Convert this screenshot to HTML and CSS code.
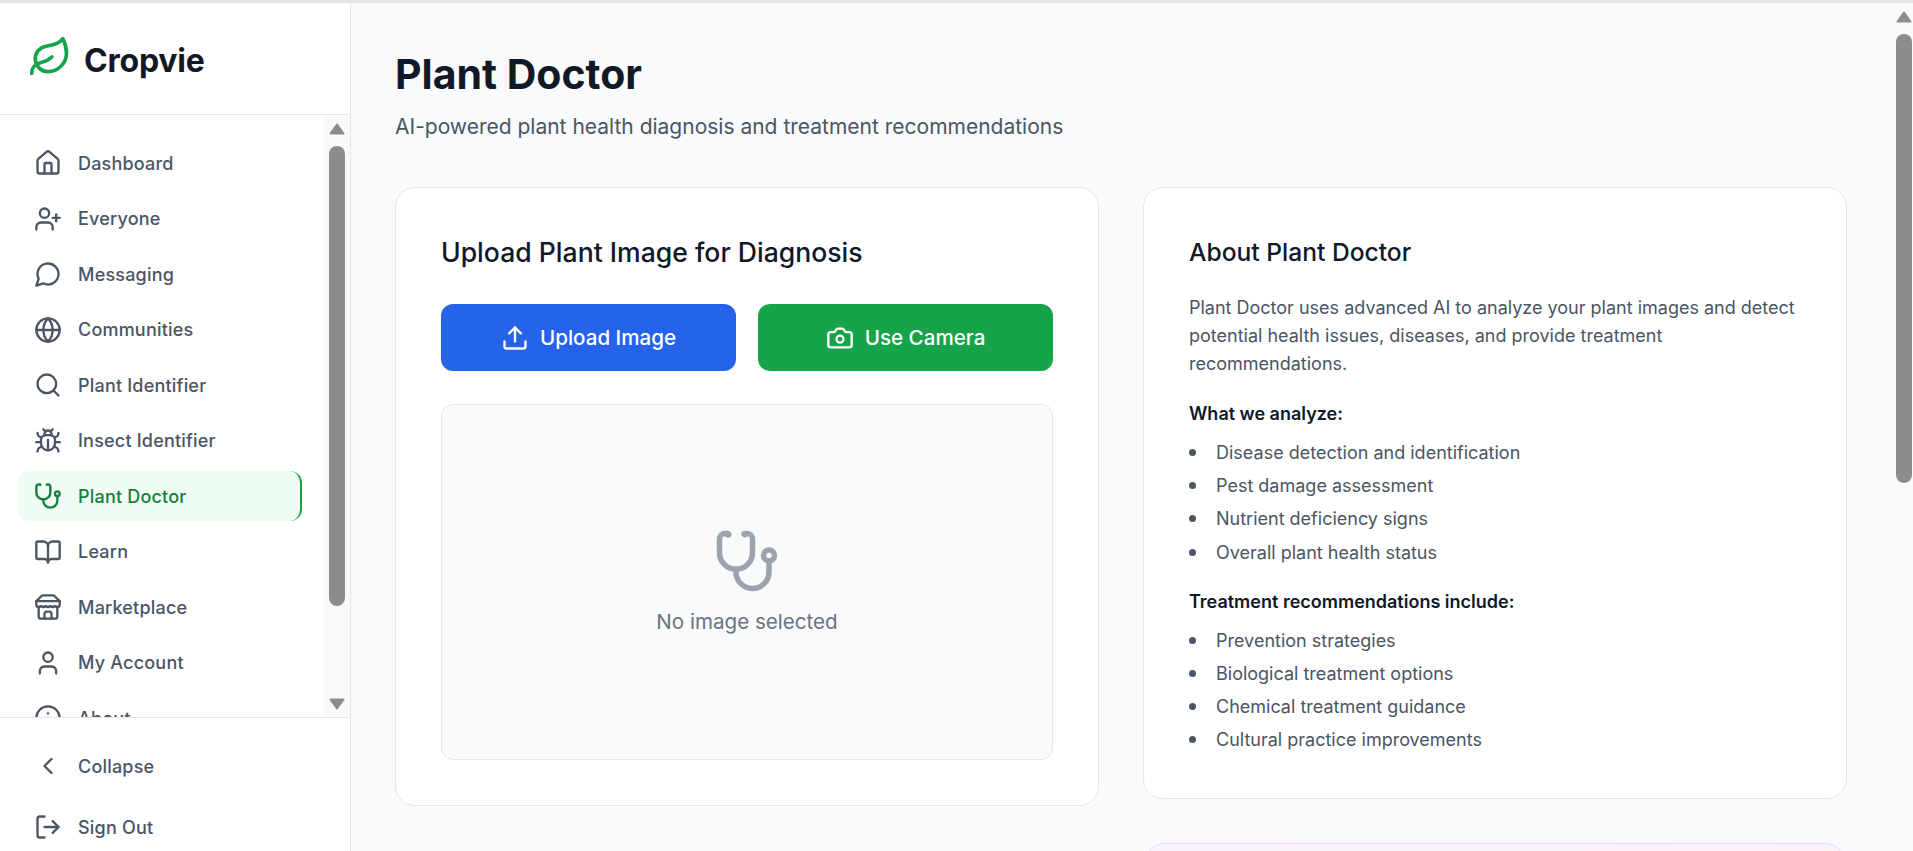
FILE: index.html
```html
<!DOCTYPE html>
<html lang="en">
<head>
    <meta charset="UTF-8">
    <title>Plant Doctor - Cropvie</title>
    <link rel="stylesheet" href="styles.css">
</head>
<body>
    <svg class="icon-defs" xmlns="http://www.w3.org/2000/svg">
        <symbol id="i-leaf" viewBox="0 0 24 24"><path d="M11 20A7 7 0 0 1 9.8 6.1C15.5 5 17 4.48 19 2c1 2 2 4.18 2 8 0 5.5-4.78 10-10 10Z"/><path d="M2 21c0-3 1.85-5.36 5.08-6C9.5 14.52 12 13 13 12"/></symbol>
        <symbol id="i-home" viewBox="0 0 24 24"><path d="M15 21v-8a1 1 0 0 0-1-1h-4a1 1 0 0 0-1 1v8"/><path d="M3 10a2 2 0 0 1 .709-1.528l7-5.999a2 2 0 0 1 2.582 0l7 5.999A2 2 0 0 1 21 10v9a2 2 0 0 1-2 2H5a2 2 0 0 1-2-2z"/></symbol>
        <symbol id="i-user-plus" viewBox="0 0 24 24"><path d="M16 21v-2a4 4 0 0 0-4-4H6a4 4 0 0 0-4 4v2"/><circle cx="9" cy="7" r="4"/><line x1="19" x2="19" y1="8" y2="14"/><line x1="22" x2="16" y1="11" y2="11"/></symbol>
        <symbol id="i-message" viewBox="0 0 24 24"><path d="M7.9 20A9 9 0 1 0 4 16.1L2 22Z"/></symbol>
        <symbol id="i-globe" viewBox="0 0 24 24"><circle cx="12" cy="12" r="10"/><path d="M12 2a14.5 14.5 0 0 0 0 20 14.5 14.5 0 0 0 0-20"/><path d="M2 12h20"/></symbol>
        <symbol id="i-search" viewBox="0 0 24 24"><circle cx="11" cy="11" r="8"/><path d="m21 21-4.3-4.3"/></symbol>
        <symbol id="i-bug" viewBox="0 0 24 24"><path d="m8 2 1.88 1.88"/><path d="M14.12 3.88 16 2"/><path d="M9 7.13v-1a3.003 3.003 0 1 1 6 0v1"/><path d="M12 20c-3.3 0-6-2.7-6-6v-3a4 4 0 0 1 4-4h4a4 4 0 0 1 4 4v3c0 3.3-2.7 6-6 6"/><path d="M12 20v-9"/><path d="M6.53 9C4.6 8.8 3 7.1 3 5"/><path d="M6 13H2"/><path d="M3 21c0-2.1 1.7-3.9 3.8-4"/><path d="M20.97 5c0 2.1-1.6 3.8-3.5 4"/><path d="M22 13h-4"/><path d="M17.2 17c2.1.1 3.8 1.9 3.8 4"/></symbol>
        <symbol id="i-stethoscope" viewBox="0 0 24 24"><path d="M4.8 2.3A.3.3 0 1 0 5 2H4a2 2 0 0 0-2 2v5a6 6 0 0 0 6 6a6 6 0 0 0 6-6V4a2 2 0 0 0-2-2h-1a.2.2 0 1 0 .3.3"/><path d="M8 15v1a6 6 0 0 0 6 6a6 6 0 0 0 6-6v-4"/><circle cx="20" cy="10" r="2"/></symbol>
        <symbol id="i-book" viewBox="0 0 24 24"><path d="M12 7v14"/><path d="M3 18a1 1 0 0 1-1-1V4a1 1 0 0 1 1-1h5a4 4 0 0 1 4 4 4 4 0 0 1 4-4h5a1 1 0 0 1 1 1v13a1 1 0 0 1-1 1h-6a3 3 0 0 0-3 3 3 3 0 0 0-3-3z"/></symbol>
        <symbol id="i-store" viewBox="0 0 24 24"><path d="m2 7 4.41-4.41A2 2 0 0 1 7.83 2h8.34a2 2 0 0 1 1.42.59L22 7"/><path d="M4 12v8a2 2 0 0 0 2 2h12a2 2 0 0 0 2-2v-8"/><path d="M15 22v-4a2 2 0 0 0-2-2h-2a2 2 0 0 0-2 2v4"/><path d="M2 7h20"/><path d="M22 7v3a2 2 0 0 1-2 2a2.7 2.7 0 0 1-1.59-.63.7.7 0 0 0-.82 0A2.7 2.7 0 0 1 16 12a2.7 2.7 0 0 1-1.59-.63.7.7 0 0 0-.82 0A2.7 2.7 0 0 1 12 12a2.7 2.7 0 0 1-1.59-.63.7.7 0 0 0-.82 0A2.7 2.7 0 0 1 8 12a2.7 2.7 0 0 1-1.59-.63.7.7 0 0 0-.82 0A2.7 2.7 0 0 1 4 12a2 2 0 0 1-2-2V7"/></symbol>
        <symbol id="i-user" viewBox="0 0 24 24"><path d="M19 21v-2a4 4 0 0 0-4-4H9a4 4 0 0 0-4 4v2"/><circle cx="12" cy="7" r="4"/></symbol>
        <symbol id="i-info" viewBox="0 0 24 24"><circle cx="12" cy="12" r="10"/><path d="M12 16v-4"/><path d="M12 8h.01"/></symbol>
        <symbol id="i-chevron" viewBox="0 0 24 24"><path d="m15 18-6-6 6-6"/></symbol>
        <symbol id="i-logout" viewBox="0 0 24 24"><path d="M9 21H5a2 2 0 0 1-2-2V5a2 2 0 0 1 2-2h4"/><polyline points="16 17 21 12 16 7"/><line x1="21" x2="9" y1="12" y2="12"/></symbol>
        <symbol id="i-upload" viewBox="0 0 24 24"><path d="M21 15v4a2 2 0 0 1-2 2H5a2 2 0 0 1-2-2v-4"/><polyline points="17 8 12 3 7 8"/><line x1="12" x2="12" y1="3" y2="15"/></symbol>
        <symbol id="i-camera" viewBox="0 0 24 24"><path d="M14.5 4h-5L7 7H4a2 2 0 0 0-2 2v9a2 2 0 0 0 2 2h16a2 2 0 0 0 2-2V9a2 2 0 0 0-2-2h-3l-2.5-3z"/><circle cx="12" cy="13" r="3"/></symbol>
        <symbol id="i-arrow-up" viewBox="0 0 16 12"><path d="M8 1.5 14.5 10.5H1.5Z"/></symbol>
        <symbol id="i-arrow-down" viewBox="0 0 16 12"><path d="M1.5 1.5H14.5L8 10.5Z"/></symbol>
    </svg>

    <div class="app">
        <!-- Sidebar -->
        <aside class="sidebar">
            <div class="brand">
                <svg class="icon brand-icon"><use href="#i-leaf"/></svg>
                <span class="brand-name">Cropvie</span>
            </div>

            <div class="nav-wrap">
                <nav class="nav">
                    <a class="nav-item"><svg class="icon"><use href="#i-home"/></svg>Dashboard</a>
                    <a class="nav-item"><svg class="icon"><use href="#i-user-plus"/></svg>Everyone</a>
                    <a class="nav-item"><svg class="icon"><use href="#i-message"/></svg>Messaging</a>
                    <a class="nav-item"><svg class="icon"><use href="#i-globe"/></svg>Communities</a>
                    <a class="nav-item"><svg class="icon"><use href="#i-search"/></svg>Plant Identifier</a>
                    <a class="nav-item"><svg class="icon"><use href="#i-bug"/></svg>Insect Identifier</a>
                    <a class="nav-item active"><svg class="icon"><use href="#i-stethoscope"/></svg>Plant Doctor</a>
                    <a class="nav-item"><svg class="icon"><use href="#i-book"/></svg>Learn</a>
                    <a class="nav-item"><svg class="icon"><use href="#i-store"/></svg>Marketplace</a>
                    <a class="nav-item"><svg class="icon"><use href="#i-user"/></svg>My Account</a>
                    <a class="nav-item"><svg class="icon"><use href="#i-info"/></svg>About</a>
                </nav>
                <div class="scrollbar nav-scrollbar">
                    <svg class="arrow"><use href="#i-arrow-up"/></svg>
                    <span class="thumb"></span>
                    <svg class="arrow"><use href="#i-arrow-down"/></svg>
                </div>
            </div>

            <div class="sidebar-foot">
                <a class="nav-item"><svg class="icon"><use href="#i-chevron"/></svg>Collapse</a>
                <a class="nav-item"><svg class="icon"><use href="#i-logout"/></svg>Sign Out</a>
            </div>
        </aside>

        <!-- Main -->
        <main class="main">
            <h1>Plant Doctor</h1>
            <p class="subtitle">AI-powered plant health diagnosis and treatment recommendations</p>

            <div class="columns">
                <section class="card">
                    <h2 class="upload-title">Upload Plant Image for Diagnosis</h2>
                    <div class="actions">
                        <button class="btn btn-blue" type="button"><svg class="icon"><use href="#i-upload"/></svg>Upload Image</button>
                        <button class="btn btn-green" type="button"><svg class="icon"><use href="#i-camera"/></svg>Use Camera</button>
                    </div>
                    <div class="preview">
                        <svg class="icon preview-icon"><use href="#i-stethoscope"/></svg>
                        <p>No image selected</p>
                    </div>
                </section>

                <div class="side-column">
                    <section class="card about">
                        <h3>About Plant Doctor</h3>
                        <p class="about-text">Plant Doctor uses advanced AI to analyze your plant images and detect potential health issues, diseases, and provide treatment recommendations.</p>
                        <h4>What we analyze:</h4>
                        <ul>
                            <li>Disease detection and identification</li>
                            <li>Pest damage assessment</li>
                            <li>Nutrient deficiency signs</li>
                            <li>Overall plant health status</li>
                        </ul>
                        <h4>Treatment recommendations include:</h4>
                        <ul>
                            <li>Prevention strategies</li>
                            <li>Biological treatment options</li>
                            <li>Chemical treatment guidance</li>
                            <li>Cultural practice improvements</li>
                        </ul>
                    </section>
                    <section class="promo-card"></section>
                </div>
            </div>
        </main>

        <div class="scrollbar page-scrollbar">
            <svg class="arrow"><use href="#i-arrow-up"/></svg>
            <span class="thumb"></span>
        </div>
    </div>
</body>
</html>
```

FILE: styles.css
```css
* {
    box-sizing: border-box;
}

html, body {
    height: 100%;
    margin: 0;
    overflow: hidden;
}

body {
    font-family: Inter, "Noto Sans", sans-serif;
    background-color: #f9fafb;
    color: #111827;
    border-top: 3px solid #e5e5e5;
}

.icon-defs {
    display: none;
}

.icon {
    width: 28px;
    height: 28px;
    flex-shrink: 0;
    fill: none;
    stroke: currentColor;
    stroke-width: 2;
    stroke-linecap: round;
    stroke-linejoin: round;
}

.app {
    display: flex;
    height: 100%;
}

/* Sidebar */
.sidebar {
    width: 351px;
    flex-shrink: 0;
    display: flex;
    flex-direction: column;
    background-color: #fff;
    border-right: 1px solid #e5e7eb;
}

.brand {
    height: 112px;
    flex-shrink: 0;
    display: flex;
    align-items: center;
    gap: 12px;
    padding: 0 0 4px 28px;
    border-bottom: 1px solid #e5e7eb;
}

.brand-icon {
    width: 44px;
    height: 44px;
    color: #16a34a;
}

.brand-name {
    margin-top: 7px;
    font-size: 32px;
    font-weight: 700;
    letter-spacing: -0.2px;
}

.nav-wrap {
    flex: 1;
    min-height: 0;
    display: flex;
}

.nav {
    flex: 1;
    min-width: 0;
    overflow: hidden;
    display: flex;
    flex-direction: column;
    gap: 5.55px;
    padding: 23px 22px 0 17px;
}

.nav-item {
    height: 50px;
    flex-shrink: 0;
    display: flex;
    align-items: center;
    gap: 16px;
    padding: 0 17px;
    border-radius: 12px;
    font-size: 18px;
    font-weight: 500;
    letter-spacing: 0.2px;
    color: #4b5563;
}

.nav-item.active {
    background-color: #f0fdf4;
    color: #15803d;
    border-right: 2px solid #16a34a;
}

.sidebar-foot {
    height: 134px;
    flex-shrink: 0;
    display: flex;
    flex-direction: column;
    gap: 11px;
    padding: 23px 22px 0 17px;
    border-top: 1px solid #e5e7eb;
}

/* Drawn scrollbars */
.scrollbar {
    width: 26px;
    flex-shrink: 0;
    display: flex;
    flex-direction: column;
    align-items: center;
    background-color: #fafafa;
}

.scrollbar .thumb {
    width: 16px;
    flex-shrink: 0;
    background-color: #8c8c8c;
    border-radius: 8px;
}

.arrow {
    width: 16px;
    height: 12px;
    flex-shrink: 0;
    fill: #8c8c8c;
    stroke: #8c8c8c;
    stroke-width: 2;
    stroke-linejoin: round;
}

.nav-scrollbar {
    padding-top: 8px;
}

.nav-scrollbar .thumb {
    height: 460px;
    margin: 11px 0 92px;
}

.page-scrollbar {
    width: 22px;
    align-items: flex-end;
    padding: 8px 1px 0 0;
}

.page-scrollbar .thumb {
    height: 449px;
    margin-top: 11px;
}

/* Main */
.main {
    flex: 1;
    min-width: 0;
    overflow: hidden;
    padding: 47px 44px 0;
}

h1 {
    margin: 0;
    font-size: 41px;
    line-height: 48px;
    font-weight: 700;
}

.subtitle {
    margin: 15px 0 0;
    font-size: 21px;
    line-height: 28px;
    color: #4b5563;
}

.columns {
    display: grid;
    grid-template-columns: 1fr 1fr;
    gap: 44px;
    align-items: start;
    margin-top: 46px;
}

.card {
    background-color: #fff;
    border: 1px solid #e5e7eb;
    border-radius: 20px;
    padding: 45px;
}

.upload-title {
    margin: 0;
    font-size: 26.6px;
    line-height: 38px;
    font-weight: 500;
}

.actions {
    display: grid;
    grid-template-columns: 1fr 1fr;
    gap: 22px;
    margin-top: 33px;
}

.btn {
    height: 67px;
    display: flex;
    align-items: center;
    justify-content: center;
    gap: 11px;
    border: none;
    border-radius: 12px;
    color: #fff;
    font-family: inherit;
    font-size: 20.6px;
    font-weight: 500;
}

.btn-blue {
    background-color: #2563eb;
}

.btn-green {
    background-color: #16a34a;
}

.preview {
    height: 356px;
    margin-top: 33px;
    display: flex;
    flex-direction: column;
    align-items: center;
    justify-content: center;
    background-color: #f9fafb;
    border: 1px solid #e5e7eb;
    border-radius: 12px;
    color: #6b7280;
    font-size: 20.6px;
    line-height: 28px;
}

.preview p {
    margin: 14px 0 0;
}

.preview-icon {
    width: 66px;
    height: 66px;
    color: #9ca3af;
}

.side-column {
    display: flex;
    flex-direction: column;
    gap: 44px;
}

.about {
    padding-bottom: 41px;
}

.about h3 {
    margin: 0;
    font-size: 24.6px;
    line-height: 38px;
    font-weight: 500;
}

.about-text {
    margin: 23px 0 0;
    font-size: 18px;
    line-height: 28px;
    color: #4b5563;
}

.about h4 {
    margin: 22px 0 0;
    font-size: 18px;
    line-height: 28px;
    font-weight: 600;
}

.about ul + h4 {
    margin-top: 19px;
}

.about ul {
    list-style: none;
    margin: 8px 0 0;
    padding: 0;
}

.about li {
    display: flex;
    align-items: center;
    height: 33.2px;
    gap: 20px;
    font-size: 18px;
    color: #4b5563;
}

.about li::before {
    content: "";
    width: 7px;
    height: 7px;
    border-radius: 50%;
    background-color: #4b5563;
}

.promo-card {
    height: 120px;
    margin: 0 2px;
    border: 1px solid #e9d5ff;
    border-radius: 20px;
    background: linear-gradient(90deg, #faf5ff, #fdf2f8);
}
```
